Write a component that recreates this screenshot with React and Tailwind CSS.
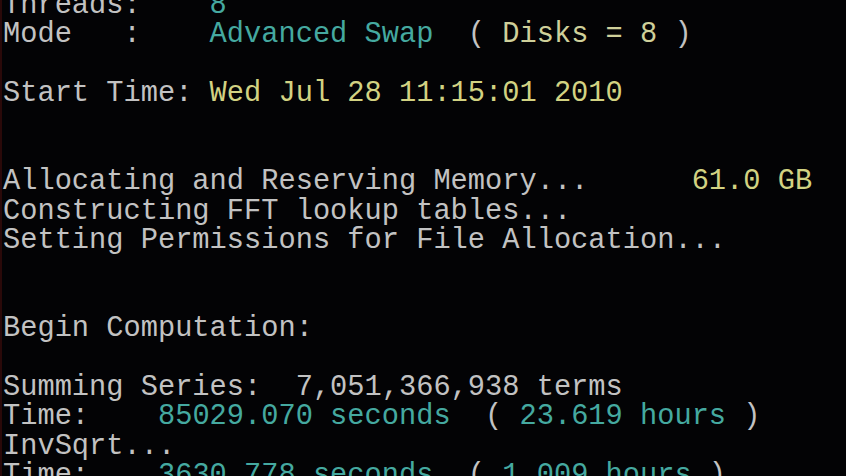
import React from "react";

const G = "text-[#c2c2c2]";
const T = "text-[#45a9a0]";
const Y = "text-[#d2d282]";
const D = "text-[#cfd09a]";

function Line({ children }) {
  return <div className="h-[29.4px] whitespace-pre">{children}</div>;
}

export default function App() {
  return (
    <div className="w-[846px] h-[476px] overflow-hidden bg-[#030305] border-l-2 border-[#2a0909]">
      <div
        className="-mt-[9px] pl-[1px] text-[28.7px] leading-[29.4px]"
        style={{ fontFamily: '"Liberation Mono", "DejaVu Sans Mono", monospace' }}
      >
        <Line><span className={G}>Threads:    </span><span className={T}>8</span></Line>
        <Line><span className={G}>Mode   :    </span><span className={T}>Advanced Swap</span><span className={G}>  ( </span><span className={D}>Disks = 8</span><span className={G}> )</span></Line>
        <Line> </Line>
        <Line><span className={G}>Start Time: </span><span className={Y}>Wed Jul 28 11:15:01 2010</span></Line>
        <Line> </Line>
        <Line> </Line>
        <Line><span className={G}>Allocating and Reserving Memory...      </span><span className={Y}>61.0 GB</span></Line>
        <Line><span className={G}>Constructing FFT lookup tables...</span></Line>
        <Line><span className={G}>Setting Permissions for File Allocation...</span></Line>
        <Line> </Line>
        <Line> </Line>
        <Line><span className={G}>Begin Computation:</span></Line>
        <Line> </Line>
        <Line><span className={G}>Summing Series:  7,051,366,938 terms</span></Line>
        <Line><span className={G}>Time:    </span><span className={T}>85029.070 seconds</span><span className={G}>  ( </span><span className={T}>23.619 hours</span><span className={G}> )</span></Line>
        <Line><span className={G}>InvSqrt...</span></Line>
        <Line><span className={G}>Time:    </span><span className={T}>3630.778 seconds</span><span className={G}>  ( </span><span className={T}>1.009 hours</span><span className={G}> )</span></Line>
      </div>
    </div>
  );
}
